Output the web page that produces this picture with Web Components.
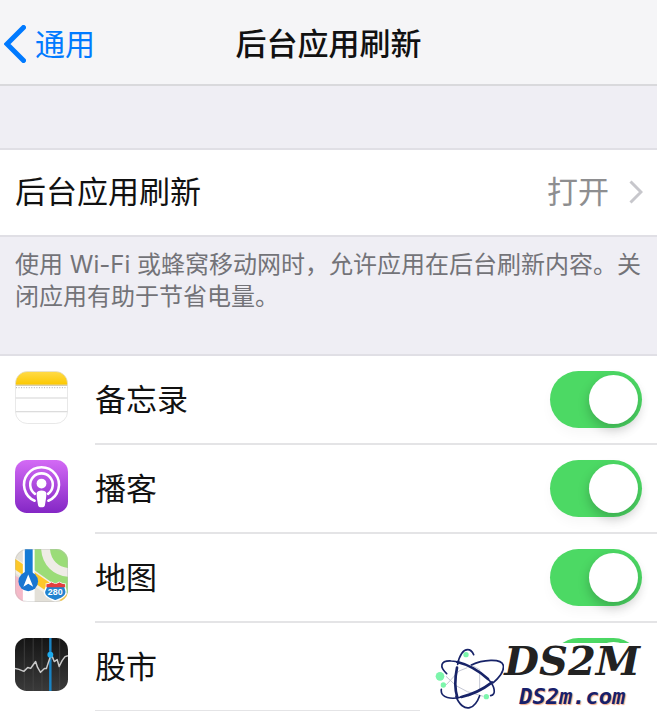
<!DOCTYPE html>
<html lang="zh-CN">
<head>
<meta charset="UTF-8">
<meta name="viewport" content="width=device-width, initial-scale=1">
<title>后台应用刷新</title>
<style>
    body {
        margin: 0;
        background: #efeef4;
        color: #111;
        font-family: Inter, "Noto Sans CJK SC", sans-serif;
        font-size: 31px;
    }
    svg { display: block; }
</style>
</head>
<body>
<settings-page>
    <nav-bar slot="nav" back="通用">后台应用刷新</nav-bar>
    <link-row value="打开">后台应用刷新</link-row>
    <group-note>使用 Wi-Fi 或蜂窝移动网时，允许应用在后台刷新内容。关闭应用有助于节省电量。</group-note>
    <app-list>
        <app-row name="备忘录">
            <svg viewBox="0 0 54 54" aria-hidden="true">
                <defs>
                    <clipPath id="notes-clip"><rect x=".5" y=".5" width="53" height="53" rx="12"/></clipPath>
                    <linearGradient id="notes-top" x2="0" y2="1"><stop stop-color="#ffdc4c"/><stop offset="1" stop-color="#fcc800"/></linearGradient>
                </defs>
                <g clip-path="url(#notes-clip)">
                    <path fill="#fff" d="M0 0h54v54H0z"/>
                    <path fill="url(#notes-top)" d="M0 0h54v14H0z"/>
                    <path stroke="#c5b98f" d="M0 14.5h54"/>
                    <path stroke="#aaa" stroke-dasharray="1 1.6" d="M1 17h53"/>
                    <path stroke="#d2d2d2" d="M0 27.5h54M0 41.5h54"/>
                </g>
                <rect x=".5" y=".5" width="53" height="53" rx="12" fill="none" stroke="#ddd" stroke-opacity=".7"/>
            </svg>
        </app-row>
        <app-row name="播客">
            <svg viewBox="0 0 54 54" aria-hidden="true">
                <defs><linearGradient id="pod-bg" x2="0" y2="1"><stop stop-color="#d36af5"/><stop offset="1" stop-color="#8427c5"/></linearGradient></defs>
                <rect width="54" height="54" rx="12" fill="url(#pod-bg)"/>
                <g fill="none" stroke="#fff" stroke-width="2.6" stroke-linecap="round">
                    <path d="M20 41.5A17.8 17.8 0 1 1 34 41.5"/>
                    <path d="M20.3 34.5A11.5 11.5 0 1 1 33.7 34.5"/>
                </g>
                <circle cx="27" cy="24" r="5" fill="#fff"/>
                <path fill="#fff" d="M22 34c0-4 10-4 10 0 0 4-1 9-1.500 12-.5 3-6.500 3-7 0-.5-3-1.500-8-1.500-12z"/>
            </svg>
        </app-row>
        <app-row name="地图">
            <svg viewBox="0 0 54 54" aria-hidden="true">
                <defs><clipPath id="map-clip"><rect width="54" height="54" rx="12"/></clipPath></defs>
                <g clip-path="url(#map-clip)">
                    <path fill="#e3e0d8" d="M0 0h54v54H0z"/>
                    <path fill="#9bdc78" d="M19 0h35v46L19 21z"/>
                    <path fill="none" stroke="#efece6" stroke-width="9" d="M31-3C31 14 42 24 58 24"/>
                    <path fill="#f5b9c8" d="M0 27l19 11v16H0z"/>
                    <path stroke="#f4efe3" stroke-width="13" d="M-5 13l64 44"/>
                    <path stroke="#fdc829" stroke-width="9" d="M-5 12l64 44"/>
                    <path fill="#fff" d="M8 0h12v54H8z"/>
                    <path fill="#157bd5" d="M10 0h8v27h-8z"/>
                    <circle cx="13.5" cy="33" r="10" fill="#1976d2"/>
                    <path fill="#fff" d="M13.5 26l5 12.500-5-3-5 3z"/>
                    <path fill="#2383d0" stroke="#fff" stroke-width="1.5" d="M32 36c3 0 4-1 5-2 3 2 6 2 8 0 2 1 3 2 6 2-1 4 2 6 1 9-1 5-7 6-11 8-4-2-10-3-11-8-1-3 3-5 2-9z"/>
                    <path fill="#e43e3e" d="M32 36c3 0 4-1 5-2 3 2 6 2 8 0 2 1 3 2 6 2v3H32z"/>
                </g>
                <text x="41" y="47" text-anchor="middle" font-family="Liberation Sans" font-weight="bold" font-size="9" fill="#fff">280</text>
                <rect x=".5" y=".5" width="53" height="53" rx="12" fill="none" stroke="#bbb" stroke-opacity=".4"/>
            </svg>
        </app-row>
        <app-row name="股市">
            <svg viewBox="0 0 54 54" aria-hidden="true">
                <defs><linearGradient id="stock-bg" x2="0" y2="1"><stop stop-color="#151515"/><stop offset="1" stop-color="#3a3a3a"/></linearGradient></defs>
                <rect width="54" height="54" rx="12" fill="url(#stock-bg)"/>
                <path stroke="#4a4a4a" stroke-opacity=".7" d="M9.5 1v52M18.5 0v54M27.5 0v54M45.5 1v52"/>
                <path stroke="#1983c4" stroke-width="2.5" d="M36 0v54"/>
                <path fill="none" stroke="#c9c9c9" stroke-width="1.5" stroke-linejoin="round" d="M0 31l4 1 5 2 4-4 3 1 2-3 3-4 2 6 3 5 4-4 2 0 2-6 2-6 2 0 2 5 3-2 2 7 3-6 3-4 3-1"/>
                <circle cx="36" cy="17" r="3" fill="#1dabee"/>
            </svg>
        </app-row>
    </app-list>
    <site-mark slot="mark" name="DS2M" site="DS2m.com"></site-mark>
</settings-page>

<script>
// --- Web Component: SettingsPage ---
class SettingsPage extends HTMLElement {
    constructor() {
        super();
        this.attachShadow({ mode: 'open' }).innerHTML = `
            <style>
                :host {
                    display: block;
                    position: relative;
                    min-height: 100vh;
                }
                main {
                    display: flex;
                    flex-direction: column;
                    padding-top: 62px;
                }
                .mark {
                    position: absolute;
                    right: 0;
                    bottom: 0;
                }
            </style>
            <slot name="nav"></slot>
            <main><slot></slot></main>
            <div class="mark"><slot name="mark"></slot></div>
        `;
    }
}

// --- Web Component: NavBar ---
class NavBar extends HTMLElement {
    connectedCallback() {
        this.attachShadow({ mode: 'open' }).innerHTML = `
            <style>
                :host {
                    display: block;
                    background: #f5f5f7;
                    border-bottom: 2px solid #d9d9dc;
                }
                header {
                    display: grid;
                    grid-template-columns: 1fr auto 1fr;
                    align-items: center;
                    padding: 24px 4px 20px;
                    line-height: 40px;
                }
                a {
                    display: flex;
                    align-items: center;
                    gap: 9px;
                    color: #007aff;
                    font-size: 30px;
                    text-decoration: none;
                }
                svg { width: 22px; height: 38px; }
                h1 {
                    margin: 0;
                    font-size: 31px;
                    font-weight: 500;
                }
            </style>
            <header>
                <a href="#">
                    <svg viewBox="0 0 22 38" aria-hidden="true"><path d="M19.500 2.500L3 19l16.500 16.500" fill="none" stroke="currentColor" stroke-width="5" stroke-linecap="round"/></svg>
                    <span>${this.getAttribute('back')}</span>
                </a>
                <h1><slot></slot></h1>
            </header>
        `;
    }
}

// --- Web Component: LinkRow ---
class LinkRow extends HTMLElement {
    connectedCallback() {
        this.attachShadow({ mode: 'open' }).innerHTML = `
            <style>
                :host {
                    display: block;
                    background: #fff;
                    border-top: 2px solid #e0dfe5;
                    border-bottom: 2px solid #e0dfe5;
                }
                a {
                    display: flex;
                    align-items: center;
                    padding: 19px 14px 21px 15px;
                    color: inherit;
                    line-height: 45px;
                    text-decoration: none;
                }
                .value {
                    margin-left: auto;
                    color: #8e8e90;
                }
                svg {
                    width: 14px;
                    height: 24px;
                    margin-left: 20px;
                }
            </style>
            <a href="#">
                <span><slot></slot></span>
                <span class="value">${this.getAttribute('value')}</span>
                <svg viewBox="0 0 14 24" aria-hidden="true"><path d="M1.500 1.500L12 12L1.500 22.500" fill="none" stroke="#c7c7cc" stroke-width="3"/></svg>
            </a>
        `;
    }
}

// --- Web Component: GroupNote ---
class GroupNote extends HTMLElement {
    constructor() {
        super();
        this.attachShadow({ mode: 'open' }).innerHTML = `
            <style>
                :host {
                    display: block;
                    padding: 12px 8px 41px 15px;
                    color: #737378;
                    font-size: 24px;
                    line-height: 32px;
                }
                p { margin: 0; }
            </style>
            <p><slot></slot></p>
        `;
    }
}

// --- Web Component: AppList ---
class AppList extends HTMLElement {
    constructor() {
        super();
        this.attachShadow({ mode: 'open' }).innerHTML = `
            <style>
                :host {
                    display: block;
                    background: #fff;
                    border-top: 2px solid #e0dfe5;
                }
            </style>
            <slot></slot>
        `;
    }
}

// --- Web Component: AppRow ---
class AppRow extends HTMLElement {
    connectedCallback() {
        this.attachShadow({ mode: 'open' }).innerHTML = `
            <style>
                :host {
                    display: flex;
                    gap: 27px;
                    padding-left: 15px;
                }
                .icon {
                    width: 53px;
                    height: 53px;
                    padding-top: 15px;
                }
                label {
                    flex: 1;
                    display: flex;
                    justify-content: space-between;
                    padding: 15px 15px 15px 0;
                    border-bottom: 2px solid #e4e4e6;
                    line-height: 57px;
                }
                input {
                    appearance: none;
                    display: flex;
                    width: 92px;
                    height: 57px;
                    margin: 0;
                    padding: 4px;
                    box-sizing: border-box;
                    border-radius: 29px;
                    background: #e5e5ea;
                    box-shadow: 0 6px 12px rgba(0, 0, 0, 0.03);
                    cursor: pointer;
                }
                input::before {
                    content: '';
                    width: 49px;
                    height: 49px;
                    border-radius: 50%;
                    background: #fff;
                    box-shadow: 0 5px 12px rgba(0, 0, 0, 0.22);
                }
                input:checked {
                    justify-content: flex-end;
                    background: #4cd964;
                }
            </style>
            <div class="icon"><slot></slot></div>
            <label>
                <span>${this.getAttribute('name')}</span>
                <input type="checkbox" role="switch" checked>
            </label>
        `;
    }
}

// --- Web Component: SiteMark ---
class SiteMark extends HTMLElement {
    connectedCallback() {
        this.attachShadow({ mode: 'open' }).innerHTML = `
            <style>
                :host {
                    display: flex;
                    padding: 0 17px 0 14px;
                    background: #fff;
                    font-style: italic;
                    font-weight: bold;
                }
                svg { width: 70px; height: 69px; }
                .words {
                    display: flex;
                    flex-direction: column;
                    align-items: center;
                    gap: 4px;
                }
                .name {
                    color: #222;
                    font-family: "DejaVu Serif", serif;
                    font-size: 40px;
                    line-height: 36px;
                }
                .site {
                    color: #17206b;
                    font-family: "DejaVu Sans Mono", monospace;
                    font-size: 22px;
                    line-height: 28px;
                    text-shadow: 1px 1px 1px #f0a584;
                }
            </style>
            <svg viewBox="0 12 210 207" aria-hidden="true">
                <path d="M36 138L75 96L100 86M36 112L66 140L100 158L148 172M137 92V150L102 172M112 78L137 92" fill="none" stroke="#c3c6d3" stroke-width="3"/>
                <g fill="none" stroke="#172368" stroke-linecap="round">
                    <path stroke-width="5" d="M71 76C76 48 88 32 101 32C109 32 115 38 119 47M66 172C76 198 92 210 107 206C121 202 132 184 137 170"/>
                    <path stroke-width="8" d="M69 86C62 120 62 150 70 176"/>
                    <path stroke-width="5" d="M38 104C16 84 18 64 52 66C62 66 70 68 76 71M162 120C182 140 188 166 170 170"/>
                    <path stroke-width="8" d="M70 69C108 78 140 100 162 120"/>
                    <path stroke-width="5" d="M112 78C144 62 204 56 208 80C211 98 194 117 178 131M82 174C54 182 18 178 22 151"/>
                    <path stroke-width="8" d="M174 130C148 150 116 166 82 174"/>
                </g>
                <g fill="#7cf5ab">
                    <circle cx="96" cy="47" r="8"/>
                    <circle cx="18" cy="112" r="13"/>
                    <circle cx="28" cy="138" r="8"/>
                    <circle cx="157" cy="173" r="8"/>
                </g>
            </svg>
            <div class="words">
                <span class="name">${this.getAttribute('name')}</span>
                <span class="site">${this.getAttribute('site')}</span>
            </div>
        `;
    }
}

customElements.define('settings-page', SettingsPage);
customElements.define('nav-bar', NavBar);
customElements.define('link-row', LinkRow);
customElements.define('group-note', GroupNote);
customElements.define('app-list', AppList);
customElements.define('app-row', AppRow);
customElements.define('site-mark', SiteMark);
</script>
</body>
</html>
